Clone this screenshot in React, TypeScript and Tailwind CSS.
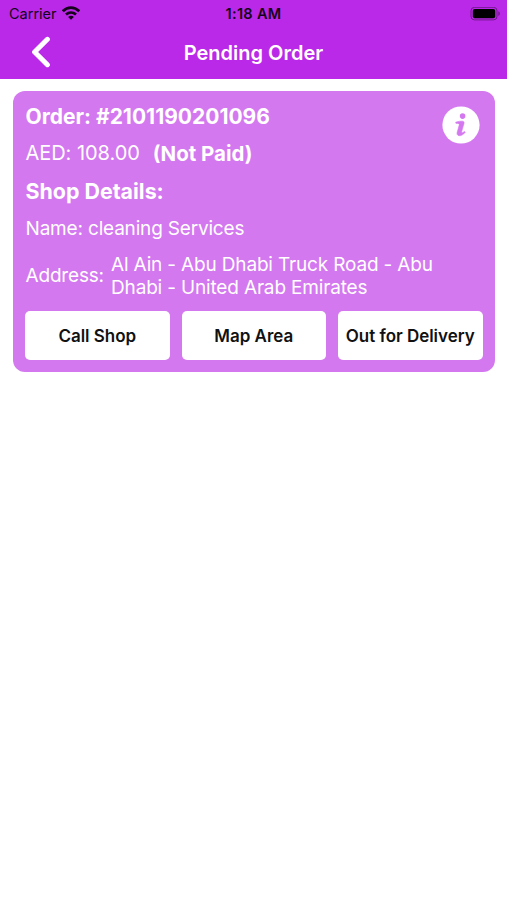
import React from 'react';

interface Order {
  id: string;
  amount: string;
  status: string;
  shop: string;
  address: string;
}

const order: Order = {
  id: '2101190201096',
  amount: '108.00',
  status: 'Not Paid',
  shop: 'cleaning Services',
  address: 'Al Ain - Abu Dhabi Truck Road - Abu Dhabi - United Arab Emirates',
};

const actions = ['Call Shop', 'Map Area', 'Out for Delivery'];

const StatusBar: React.FC = () => (
  <div className="h-[27px] pl-[9px] pr-[6px] grid grid-cols-3 items-center text-[#14031a]">
    <div className="flex items-center">
      <span className="text-[14.5px] leading-[27px] w-[53px] whitespace-nowrap">Carrier</span>
      <svg className="-mt-px" width="18" height="14" viewBox="0 0 18 14" fill="none" stroke="currentColor" strokeWidth="2.7">
        <path d="M.8 5.2C5.6.4 12.4.4 17.2 5.2" />
        <path d="M4 8.6c2.9-2.7 7.1-2.7 10 0" />
        <path d="M9 13.8l-2.9-2.9c1.6-1.4 4.2-1.4 5.8 0z" fill="currentColor" stroke="none" />
      </svg>
    </div>
    <span className="pr-[3px] text-center text-[14.5px] tracking-[0.3px] font-semibold">1:18 AM</span>
    <svg className="justify-self-end" width="31" height="14" viewBox="0 0 31 14">
      <rect x="1" y=".3" width="26" height="12.6" rx="3.5" fill="none" stroke="#000" strokeOpacity=".4" />
      <rect x="2.8" y="2" width="22.4" height="9.2" rx="1.8" fill="#000" />
      <path d="M28.4 4.3c1.8.7 1.8 4 0 4.7z" fill="#000" fillOpacity=".45" />
    </svg>
  </div>
);

const InfoIcon: React.FC = () => (
  <svg width="38" height="38" viewBox="0 0 38 38">
    <circle cx="19" cy="19" r="18.6" fill="#fff" />
    <circle cx="20.6" cy="10.1" r="2.8" fill="#d478f0" />
    <path
      d="M13.7 16.2c2.6-.8 5.2-1.2 7-1 1.2.2 1.6 1 1.3 2.2l-2.3 8.2c-.3 1.3.5 1.5 2.8-.2l.8.9c-2 2.3-4.2 3.6-6.2 3.4-1.8-.2-2.4-1.5-1.9-3.4l2-7.2c.3-1.2-.2-1.6-1.4-1.7l-1.9-.1z"
      fill="#d478f0"
      stroke="#d478f0"
      strokeWidth=".6"
      strokeLinejoin="round"
    />
  </svg>
);

export default function App() {
  return (
    <div className="min-h-screen bg-white font-['Inter',sans-serif]">
      {/* Header */}
      <header className="h-[79px] bg-[#bb29e8]">
        <StatusBar />
        <div className="h-[50px] grid grid-cols-[80px_1fr_80px] items-center text-white">
          <button className="pl-[31px]" aria-label="Back">
            <svg width="20" height="32" viewBox="0 0 20 32" fill="none" stroke="currentColor" strokeWidth="5" strokeLinecap="round" strokeLinejoin="round">
              <path d="M16.4 3.3L3.6 16l12.8 12.7" />
            </svg>
          </button>
          <h1 className="pt-px text-center text-[20px] font-semibold">Pending Order</h1>
        </div>
      </header>

      {/* Order card */}
      <section className="mt-[12px] ml-[13px] mr-[12.5px] h-[281px] rounded-[12px] bg-[#d478f0] pt-[7px] px-[12px] text-white">
        <div className="flex justify-between">
          <div className="pl-[0.5px] text-[20px] leading-[37.3px] whitespace-nowrap">
            <h2 className="text-[21px] font-bold">Order: #{order.id}</h2>
            <p className="flex">
              <span className="tracking-[-0.05px]">AED: {order.amount}</span>
              <b className="ml-[13px] text-[20.5px]">({order.status})</b>
            </p>
            <h2 className="text-[21.4px] font-bold">Shop Details:</h2>
            <p className="text-[19px] tracking-[-0.18px]">Name: {order.shop}</p>
          </div>
          <div className="pt-[8px] pr-[3px]">
            <InfoIcon />
          </div>
        </div>

        <div className="mt-[5.8px] pl-[0.5px] flex items-center text-[19px] leading-[23px] tracking-[-0.18px]">
          <span className="w-[85.5px] shrink-0">Address:</span>
          <span className="w-[340px] tracking-[-0.16px]">{order.address}</span>
        </div>

        <div className="mt-[12px] grid grid-cols-3 gap-[12px]">
          {actions.map((label) => (
            <button
              key={label}
              className="h-[49px] pt-[2px] rounded-[5px] bg-white text-[17px] tracking-[-0.03px] font-semibold text-[#111] whitespace-nowrap"
            >
              {label}
            </button>
          ))}
        </div>
      </section>
    </div>
  );
}
